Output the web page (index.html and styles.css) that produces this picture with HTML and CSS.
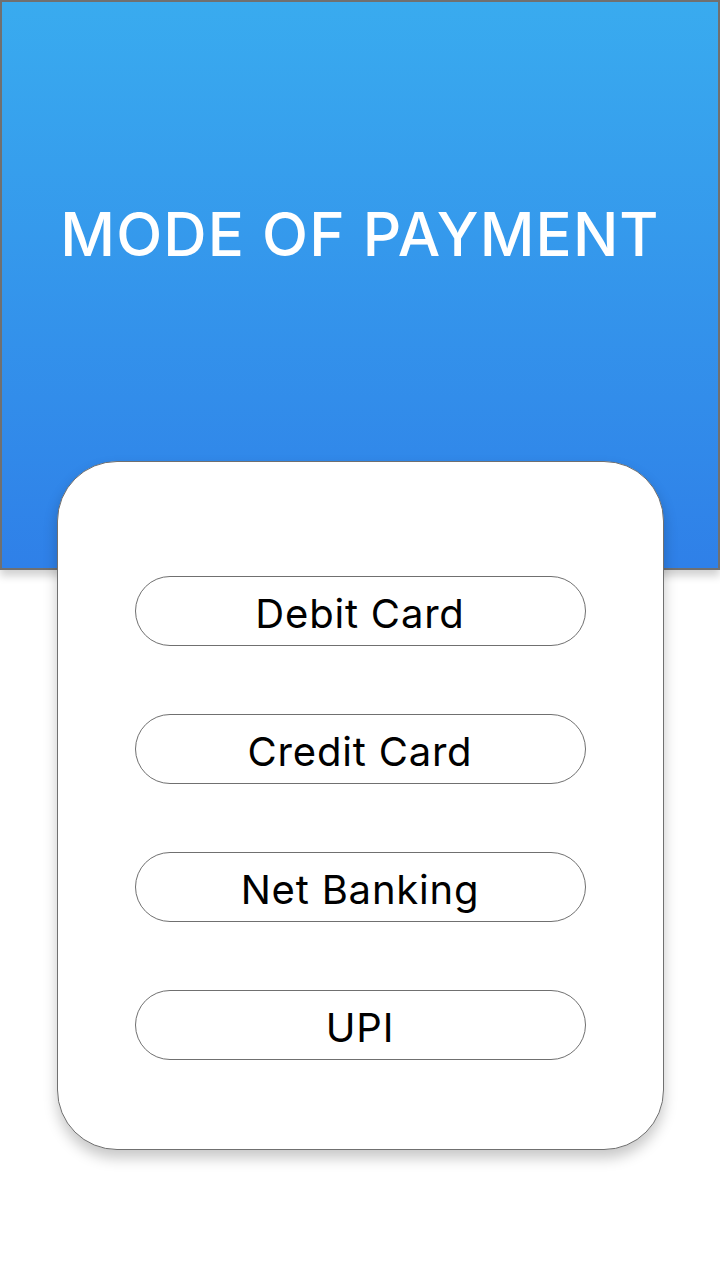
FILE: index.html
```html
<!DOCTYPE html>
<html>
<head>
<meta charset="utf-8">
<link rel="stylesheet" href="styles.css">
</head>
<body>
<div class="page">
  <header class="hero">
    <h1 class="title">MODE OF PAYMENT</h1>
  </header>
  <main class="card">
    <button class="option">Debit Card</button>
    <button class="option">Credit Card</button>
    <button class="option">Net Banking</button>
    <button class="option">UPI</button>
  </main>
</div>
</body>
</html>
```

FILE: styles.css
```css
html, body {
  margin: 0;
  padding: 0;
  background: #ffffff;
}
body {
  font-family: Inter, "Noto Sans", sans-serif;
  width: 720px;
  height: 1280px;
  overflow: hidden;
}
.page {
  display: flex;
  flex-direction: column;
  align-items: center;
}
.hero {
  box-sizing: border-box;
  width: 720px;
  height: 570px;
  border: 2px solid #707070;
  background: linear-gradient(180deg, #39abef 0%, #2f80e8 100%);
  box-shadow: 0 6px 8px rgba(0, 0, 0, 0.18);
  display: flex;
  justify-content: center;
  padding-top: 196px;
}
.title {
  margin: 0;
  color: #ffffff;
  font-weight: 500;
  font-size: 60px;
  line-height: 72px;
  letter-spacing: 1.1px;
  height: 72px;
}
.card {
  box-sizing: border-box;
  width: 607px;
  height: 689px;
  margin-top: -109px;
  position: relative;
  background: #ffffff;
  border: 1.5px solid #707070;
  border-radius: 60px;
  box-shadow: 0 8px 14px rgba(0, 0, 0, 0.22);
  display: flex;
  flex-direction: column;
  align-items: center;
  padding-top: 114px;
  gap: 68px;
}
.option {
  box-sizing: border-box;
  width: 451px;
  height: 70px;
  border: 1.5px solid #707070;
  border-radius: 35px;
  background: #ffffff;
  font-family: Inter, "Noto Sans", sans-serif;
  font-size: 40px;
  letter-spacing: 0.8px;
  color: #000000;
  padding: 4px 0 0 0;
  display: flex;
  align-items: center;
  justify-content: center;
}
```
